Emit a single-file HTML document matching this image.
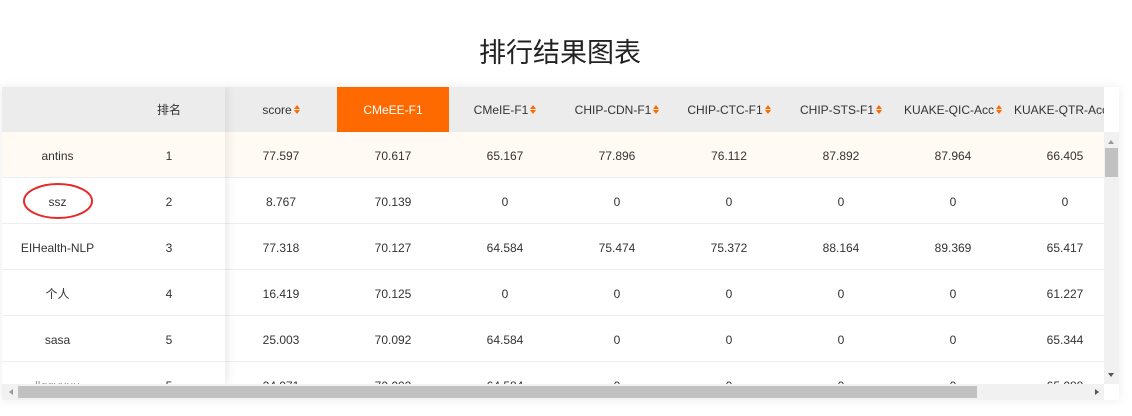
<!DOCTYPE html>
<html><head><meta charset="utf-8"><style>
*{margin:0;padding:0;box-sizing:border-box}
body{width:1132px;height:416px;background:#fff;font-family:"Liberation Sans","Noto Sans CJK SC",sans-serif;color:#333;position:relative;overflow:hidden}
.title{position:absolute;left:0;width:1120px;top:31px;text-align:center;font-size:27px;color:#222;font-family:"Liberation Sans","Noto Sans CJK SC",sans-serif}
.wrap{position:absolute;left:2px;top:87px;width:1117px;height:313px;box-shadow:0 0 10px rgba(0,0,0,.08);background:#fff}
.clip{position:absolute;left:0;top:0;width:1102px;height:297px;overflow:hidden}
.row{position:absolute;left:0;height:46px;width:1200px;border-bottom:1px solid #ebeef5}
.c{position:absolute;top:1px;height:100%;display:flex;align-items:center;justify-content:center;font-size:12px;white-space:nowrap}
.hd{background:#ececec;height:45px;border:none}
.hd .c{top:0}
.r1{background:#fffaf3}
.fix{position:absolute;left:0;top:0;width:223px;height:297px;box-shadow:3px 0 8px rgba(0,0,0,.08);overflow:hidden;background:#fff}
.s{display:inline-block;width:6px;margin-left:2px;position:relative;height:10px;vertical-align:middle}
.s:before{content:"";position:absolute;left:0;top:0;border:3px solid transparent;border-bottom:4px solid #ff6a00;border-top:0}
.s:after{content:"";position:absolute;left:0;top:5px;border:3px solid transparent;border-top:4px solid #ff6a00;border-bottom:0}
.or{background:#ff6a00;color:#fff}
.vs{position:absolute;left:1102px;top:45px;width:15px;height:252px;background:#f1f1f1}
.hs{position:absolute;left:0;top:297px;width:1102px;height:16px;background:#f1f1f1}
</style></head><body>
<div class="title">排行结果图表</div>
<div class="wrap">
<div class="clip">
<div class="row hd" style="top:0"><div class="c" style="left:223px;width:112px">score<span class="s"></span></div><div class="c or" style="left:335px;width:112px">CMeEE-F1</div><div class="c" style="left:447px;width:112px">CMeIE-F1<span class="s"></span></div><div class="c" style="left:559px;width:112px">CHIP-CDN-F1<span class="s"></span></div><div class="c" style="left:671px;width:112px">CHIP-CTC-F1<span class="s"></span></div><div class="c" style="left:783px;width:112px">CHIP-STS-F1<span class="s"></span></div><div class="c" style="left:895px;width:112px">KUAKE-QIC-Acc<span class="s"></span></div><div class="c" style="left:1007px;width:112px">KUAKE-QTR-Acc<span class="s"></span></div></div>
<div class="row r1" style="top:45px"><div class="c" style="left:223px;width:112px">77.597</div><div class="c" style="left:335px;width:112px">70.617</div><div class="c" style="left:447px;width:112px">65.167</div><div class="c" style="left:559px;width:112px">77.896</div><div class="c" style="left:671px;width:112px">76.112</div><div class="c" style="left:783px;width:112px">87.892</div><div class="c" style="left:895px;width:112px">87.964</div><div class="c" style="left:1007px;width:112px">66.405</div></div>
<div class="row" style="top:91px"><div class="c" style="left:223px;width:112px">8.767</div><div class="c" style="left:335px;width:112px">70.139</div><div class="c" style="left:447px;width:112px">0</div><div class="c" style="left:559px;width:112px">0</div><div class="c" style="left:671px;width:112px">0</div><div class="c" style="left:783px;width:112px">0</div><div class="c" style="left:895px;width:112px">0</div><div class="c" style="left:1007px;width:112px">0</div></div>
<div class="row" style="top:137px"><div class="c" style="left:223px;width:112px">77.318</div><div class="c" style="left:335px;width:112px">70.127</div><div class="c" style="left:447px;width:112px">64.584</div><div class="c" style="left:559px;width:112px">75.474</div><div class="c" style="left:671px;width:112px">75.372</div><div class="c" style="left:783px;width:112px">88.164</div><div class="c" style="left:895px;width:112px">89.369</div><div class="c" style="left:1007px;width:112px">65.417</div></div>
<div class="row" style="top:183px"><div class="c" style="left:223px;width:112px">16.419</div><div class="c" style="left:335px;width:112px">70.125</div><div class="c" style="left:447px;width:112px">0</div><div class="c" style="left:559px;width:112px">0</div><div class="c" style="left:671px;width:112px">0</div><div class="c" style="left:783px;width:112px">0</div><div class="c" style="left:895px;width:112px">0</div><div class="c" style="left:1007px;width:112px">61.227</div></div>
<div class="row" style="top:229px"><div class="c" style="left:223px;width:112px">25.003</div><div class="c" style="left:335px;width:112px">70.092</div><div class="c" style="left:447px;width:112px">64.584</div><div class="c" style="left:559px;width:112px">0</div><div class="c" style="left:671px;width:112px">0</div><div class="c" style="left:783px;width:112px">0</div><div class="c" style="left:895px;width:112px">0</div><div class="c" style="left:1007px;width:112px">65.344</div></div>
<div class="row" style="top:275px"><div class="c" style="left:223px;width:112px">24.971</div><div class="c" style="left:335px;width:112px">70.002</div><div class="c" style="left:447px;width:112px">64.584</div><div class="c" style="left:559px;width:112px">0</div><div class="c" style="left:671px;width:112px">0</div><div class="c" style="left:783px;width:112px">0</div><div class="c" style="left:895px;width:112px">0</div><div class="c" style="left:1007px;width:112px">65.088</div></div>
<div class="fix">
<div class="row hd" style="top:0;width:223px"><div class="c" style="left:111px;width:112px">排名</div></div>
<div class="row r1" style="top:45px;width:223px"><div class="c" style="left:0;width:111px">antins</div><div class="c" style="left:111px;width:112px">1</div></div>
<div class="row" style="top:91px;width:223px"><div class="c" style="left:0;width:111px">ssz</div><div class="c" style="left:111px;width:112px">2</div></div>
<div class="row" style="top:137px;width:223px"><div class="c" style="left:0;width:111px">EIHealth-NLP</div><div class="c" style="left:111px;width:112px">3</div></div>
<div class="row" style="top:183px;width:223px"><div class="c" style="left:0;width:111px">个人</div><div class="c" style="left:111px;width:112px">4</div></div>
<div class="row" style="top:229px;width:223px"><div class="c" style="left:0;width:111px">sasa</div><div class="c" style="left:111px;width:112px">5</div></div>
<div class="row" style="top:275px;width:223px"><div class="c" style="left:0;width:111px">jiqqyuuu</div><div class="c" style="left:111px;width:112px">5</div></div>
</div>
<svg style="position:absolute;left:20px;top:95px" width="74" height="38"><ellipse cx="36" cy="19" rx="34" ry="17" fill="none" stroke="#e52a2a" stroke-width="2"/></svg>
</div>
<div class="vs"><div style="position:absolute;left:4px;top:8px;border:3px solid transparent;border-bottom:4px solid #999;border-top:0"></div><div style="position:absolute;left:1px;top:16px;width:13px;height:29px;background:#c1c1c1"></div><div style="position:absolute;left:4px;top:241px;border:3px solid transparent;border-top:4px solid #555;border-bottom:0"></div></div>
<div class="hs"><div style="position:absolute;left:7px;top:5px;border:3px solid transparent;border-right:4px solid #999;border-left:0"></div><div style="position:absolute;left:16px;top:2px;width:959px;height:12px;background:#c1c1c1"></div><div style="position:absolute;left:1093px;top:5px;border:3px solid transparent;border-left:4px solid #555;border-right:0"></div></div>
</div>
</body></html>
